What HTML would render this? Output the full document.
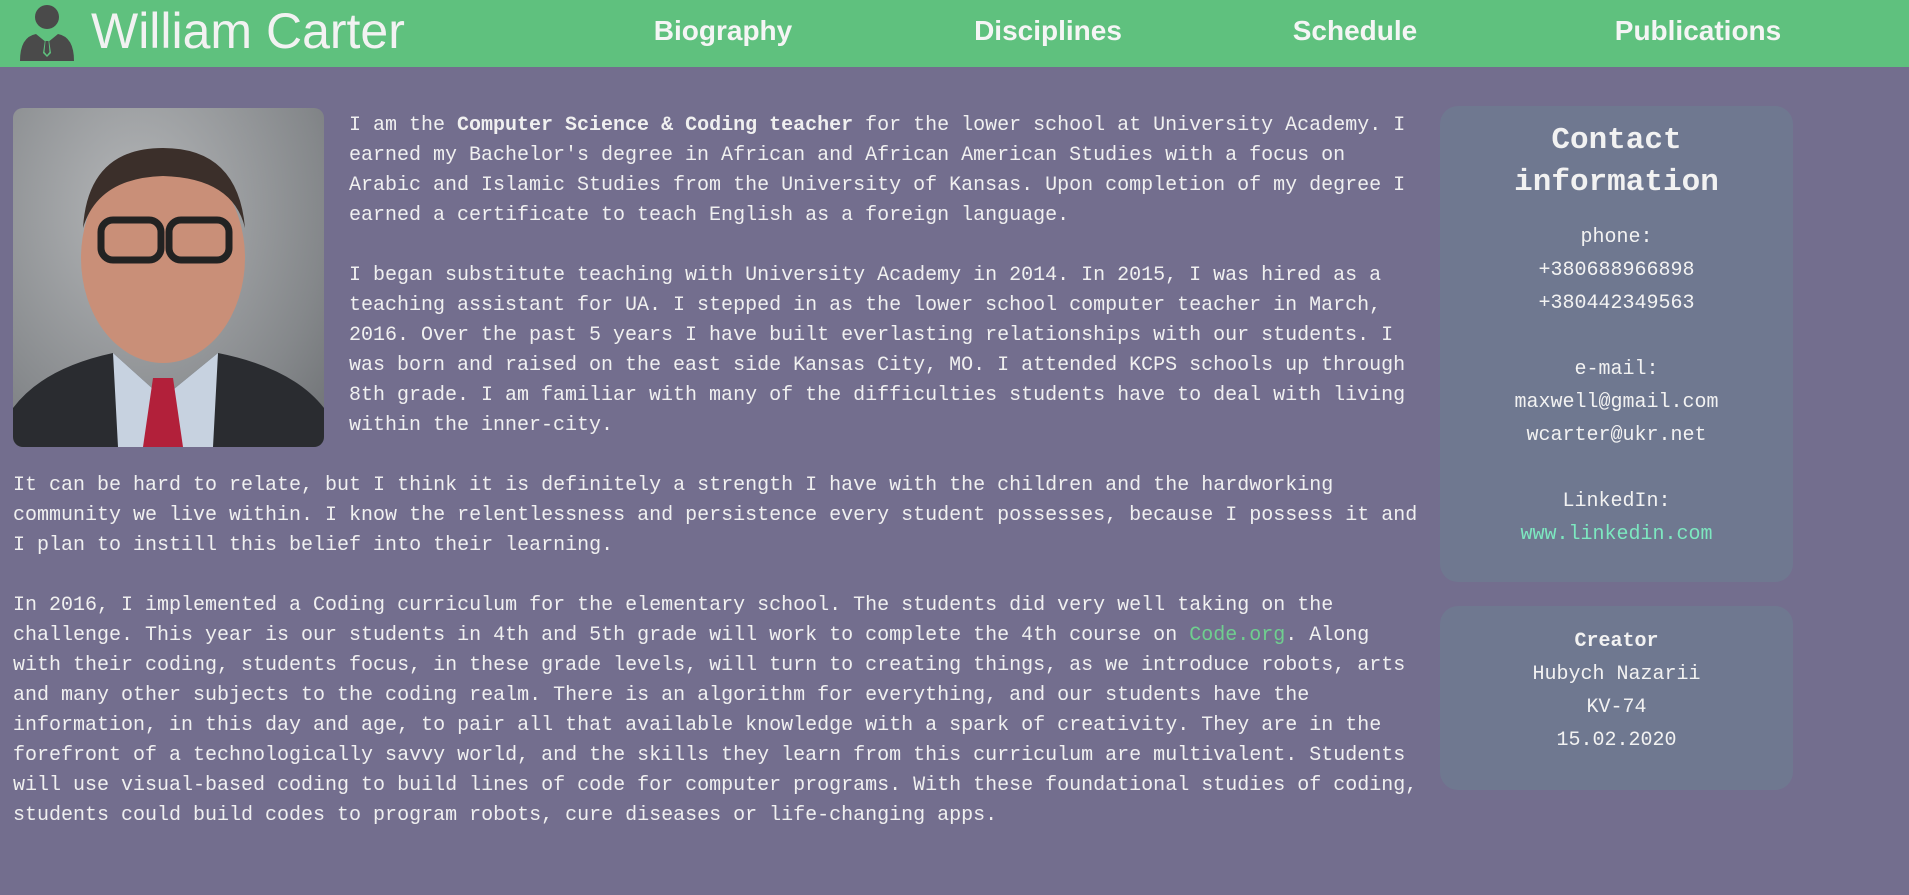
<!DOCTYPE html>
<html><head><meta charset="utf-8"><style>
*{margin:0;padding:0;box-sizing:border-box}
body{width:1909px;height:895px;background:#736e8e;overflow:hidden;font-family:"Liberation Mono",monospace;color:#f2f2f2;position:relative}
header{position:absolute;left:0;top:0;width:1909px;height:67px;background:#5fc17e}
.logo{position:absolute;left:18px;top:3px}
.name{position:absolute;left:91px;top:0px;font:50px/62px "Liberation Sans",sans-serif;color:#f2f2f2}
.nav{position:absolute;top:13px;font:bold 28px/36px "Liberation Sans",sans-serif;color:#f5f5f5;transform:translateX(-50%)}
.photo{position:absolute;left:13px;top:108px;width:311px;height:339px;border-radius:10px;overflow:hidden;background:radial-gradient(ellipse at 40% 30%,#b4b6b8,#85888b 70%,#6d7073)}
.txt{position:absolute;font-size:20px;line-height:30px;white-space:nowrap;color:#f0f0f0}
.box{position:absolute;left:1440px;width:353px;background:#6f7890;border-radius:18px;text-align:center;font-size:20px;line-height:33px}
a{color:#6fcf8f;text-decoration:none}
</style></head><body>
<header>
<svg class="logo" width="58" height="58" viewBox="0 0 58 58"><circle cx="29" cy="14" r="12" fill="#4a4a4a"/><path d="M2 58 Q2 34 18 31 L29 40 L40 31 Q56 34 56 58Z" fill="#4a4a4a"/><path d="M26 33 L32 33 L31 37 L33 50 L29 54 L25 50 L27 37Z" fill="#5fc17e"/><path d="M27.5 38 L30.5 38 L31.5 49 L29 52 L26.5 49Z" fill="#4a4a4a"/></svg>
<div class="name">William Carter</div>
<div class="nav" style="left:723px">Biography</div>
<div class="nav" style="left:1048px">Disciplines</div>
<div class="nav" style="left:1355px">Schedule</div>
<div class="nav" style="left:1698px">Publications</div>
</header>
<div class="photo">
<svg width="311" height="339" viewBox="0 0 311 339"><ellipse cx="150" cy="150" rx="82" ry="105" fill="#c98f78"/><path d="M70 120 Q75 40 150 40 Q225 40 232 120 Q220 70 150 68 Q85 70 70 120Z" fill="#3b2f2a"/><rect x="88" y="112" width="60" height="40" rx="12" fill="none" stroke="#222" stroke-width="7"/><rect x="156" y="112" width="60" height="40" rx="12" fill="none" stroke="#222" stroke-width="7"/><path d="M0 339 L0 300 Q30 260 100 245 L150 290 L205 245 Q280 260 311 300 L311 339Z" fill="#2a2c30"/><path d="M100 245 L150 290 L205 245 L200 339 L105 339Z" fill="#c7d2e0"/><path d="M140 270 L160 270 L170 339 L130 339Z" fill="#b2203a"/></svg>
</div>
<div class="txt" style="left:349px;top:111px">I am the <b>Computer Science &amp; Coding teacher</b> for the lower school at University Academy. I<br>earned my Bachelor's degree in African and African American Studies with a focus on<br>Arabic and Islamic Studies from the University of Kansas. Upon completion of my degree I<br>earned a certificate to teach English as a foreign language.</div>
<div class="txt" style="left:349px;top:261px">I began substitute teaching with University Academy in 2014. In 2015, I was hired as a<br>teaching assistant for UA. I stepped in as the lower school computer teacher in March,<br>2016. Over the past 5 years I have built everlasting relationships with our students. I<br>was born and raised on the east side Kansas City, MO. I attended KCPS schools up through<br>8th grade. I am familiar with many of the difficulties students have to deal with living<br>within the inner-city.</div>
<div class="txt" style="left:13px;top:471px">It can be hard to relate, but I think it is definitely a strength I have with the children and the hardworking<br>community we live within. I know the relentlessness and persistence every student possesses, because I possess it and<br>I plan to instill this belief into their learning.</div>
<div class="txt" style="left:13px;top:591px">In 2016, I implemented a Coding curriculum for the elementary school. The students did very well taking on the<br>challenge. This year is our students in 4th and 5th grade will work to complete the 4th course on <a>Code.org</a>. Along<br>with their coding, students focus, in these grade levels, will turn to creating things, as we introduce robots, arts<br>and many other subjects to the coding realm. There is an algorithm for everything, and our students have the<br>information, in this day and age, to pair all that available knowledge with a spark of creativity. They are in the<br>forefront of a technologically savvy world, and the skills they learn from this curriculum are multivalent. Students<br>will use visual-based coding to build lines of code for computer programs. With these foundational studies of coding,<br>students could build codes to program robots, cure diseases or life-changing apps.</div>
<div class="box" style="top:106px;height:476px;padding-top:14px">
<div style="font-weight:bold;font-size:31px;line-height:42px">Contact<br>information</div>
<div style="margin-top:17px">phone:<br>+380688966898<br>+380442349563<br><br>e-mail:<br>maxwell@gmail.com<br>wcarter@ukr.net<br><br>LinkedIn:<br><span style="color:#7de8c0">www.linkedin.com</span></div>
</div>
<div class="box" style="top:606px;height:184px;padding-top:19px">
<b>Creator</b><br>Hubych Nazarii<br>KV-74<br>15.02.2020
</div>
</body></html>
